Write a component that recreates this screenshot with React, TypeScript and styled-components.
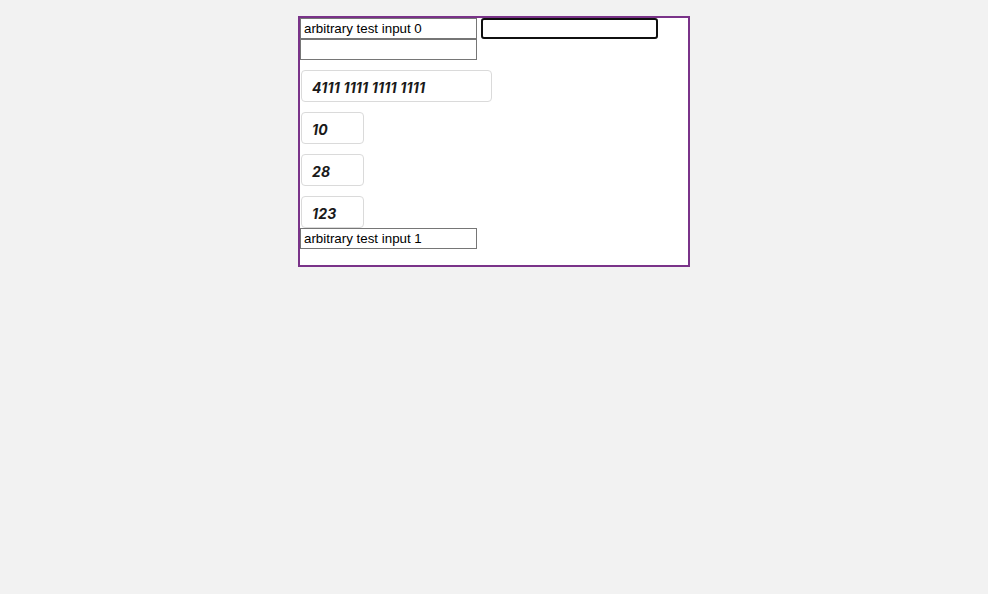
import * as React from 'react';
import styled, { createGlobalStyle } from 'styled-components';

const GlobalStyle = createGlobalStyle`
    body {
        margin: 8px;
        background-color: #f2f2f2;
        font-family: "Liberation Sans", Arial, sans-serif;
    }
`;

const fields = [
    { value: '4111 1111 1111 1111', wide: true },
    { value: '10', wide: false },
    { value: '28', wide: false },
    { value: '123', wide: false },
];

const App = () => {
    return (
        <>
            <GlobalStyle />
            <Frame>
                <InputRow>
                    <TextInput defaultValue="arbitrary test input 0" />
                    <TextInput defaultValue="" $focused />
                    <TextInput defaultValue="" />
                </InputRow>

                <FieldList>
                    {fields.map((field) => (
                        <Field key={field.value} $wide={field.wide}>
                            <FieldText>{field.value}</FieldText>
                        </Field>
                    ))}
                </FieldList>

                <InputRow>
                    <TextInput defaultValue="arbitrary test input 1" />
                </InputRow>
            </Frame>
        </>
    );
};

export default App;

const Frame = styled.div`
    box-sizing: border-box;
    width: 392px;
    height: 251px;
    margin: 8px auto 0;

    background-color: #ffffff;
    border: 2px solid #7a3389;
`;

const InputRow = styled.div`
    display: flex;
    flex-wrap: wrap;
    column-gap: 4px;
`;

const TextInput = styled.input<{ $focused?: boolean }>`
    box-sizing: border-box;
    width: 177px;
    height: 21px;

    margin: 0;
    padding: 1px 3px;

    font-family: "Liberation Sans", Arial, sans-serif;
    font-size: 13.333px;
    color: #000000;

    border: ${(p) => (p.$focused ? '2px solid #101010' : '1px solid #767676')};
    border-radius: ${(p) => (p.$focused ? '3px' : '0')};
    outline: none;
    background: #ffffff;
`;

const FieldList = styled.div`
    display: flex;
    flex-direction: column;
    align-items: flex-start;
    gap: 10px;

    padding-top: 10px;
    margin-left: 1px;
`;

const Field = styled.div<{ $wide: boolean }>`
    box-sizing: border-box;
    display: flex;
    align-items: center;

    width: ${(p) => (p.$wide ? '191px' : '63px')};
    height: 32px;
    padding: 3px 0 0 10px;

    border: 1px solid #dadada;
    border-radius: 4px;
`;

const FieldText = styled.span`
    font-family: Inter, "Open Sans", sans-serif;
    font-size: 14px;
    font-weight: 700;
    font-style: italic;
    letter-spacing: 0.2px;
    color: #1a1a1a;
`;
